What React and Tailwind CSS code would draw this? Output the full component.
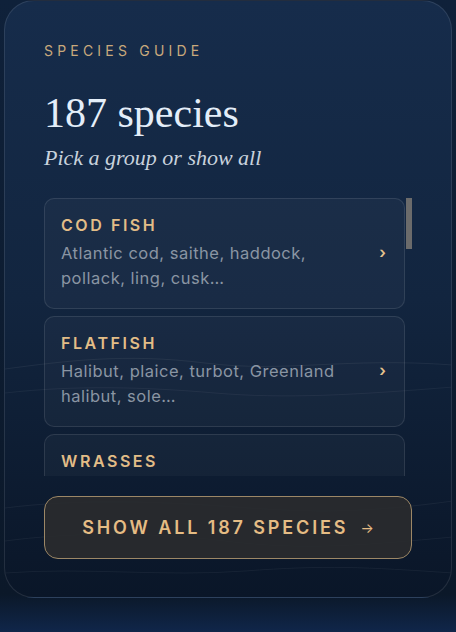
import React from "react";

const groups = [
  ["COD FISH", "Atlantic cod, saithe, haddock, pollack, ling, cusk…"],
  ["FLATFISH", "Halibut, plaice, turbot, Greenland halibut, sole…"],
  ["WRASSES", "Ballan wrasse, corkwing, cuckoo wrasse, goldsinny…"],
  ["SALMONIDS", "Atlantic salmon, sea trout, Arctic char, grayling…"],
  ["HERRINGS", "Atlantic herring, sprat, shad, allis shad…"],
];

const sans = { fontFamily: "'Inter', 'Lato', sans-serif" };
const serif = { fontFamily: "'Liberation Serif', 'DejaVu Serif', serif" };

export default function App() {
  return (
    <div className="w-[456px] h-[632px] overflow-hidden bg-gradient-to-b from-[#0f213a] via-[#0b1829] via-[94%] to-[#10264a] pl-[4px] pr-[4px]">
      <div className="relative w-[448px] h-[598px] rounded-[30px] border border-white/10 bg-gradient-to-b from-[#162c4b] via-[#12253f] to-[#0a1628] overflow-hidden">
        <svg className="absolute inset-0 pointer-events-none" width="448" height="598" viewBox="0 0 448 598" fill="none">
          <path d="M0 368 C 60 360, 120 352, 200 362 S 340 356, 448 364" stroke="rgba(255,255,255,0.06)" strokeWidth="1" />
          <path d="M0 392 C 70 384, 140 386, 210 392 S 350 394, 448 386" stroke="rgba(255,255,255,0.05)" strokeWidth="1" />
          <path d="M0 507 C 70 498, 150 500, 230 506 S 360 512, 448 500" stroke="rgba(255,255,255,0.05)" strokeWidth="1" />
          <path d="M0 540 C 60 532, 140 530, 220 540 S 360 544, 448 536" stroke="rgba(255,255,255,0.05)" strokeWidth="1" />
          <path d="M0 572 C 80 566, 160 576, 240 570 S 360 566, 448 572" stroke="rgba(255,255,255,0.05)" strokeWidth="1" />
        </svg>
        <div className="relative flex flex-col px-[39px] pt-[40px]">
          <div className="text-[14px] leading-[20px] tracking-[0.3em] text-[#c9a97c]" style={sans}>
            SPECIES GUIDE
          </div>
          <div className="mt-[29px] text-[42px] leading-[46px] text-[#e4eef9]" style={serif}>
            187 species
          </div>
          <div className="mt-[8px] text-[22px] leading-[28px] italic text-[#c8d2dd]" style={serif}>
            Pick a group or show all
          </div>
          <div className="mt-[26px] h-[278px] flex gap-[1px]">
            <div className="w-[362px] h-[278px] overflow-hidden flex flex-col gap-[7px]">
              {groups.map(([t, d]) => (
                <div
                  key={t}
                  className="shrink-0 flex items-center rounded-[10px] border border-white/10 bg-white/[0.03] pl-[16px] pr-[18px] pt-[16px] pb-[17px]"
                >
                  <div className="flex-1" style={sans}>
                    <div className="text-[16px] leading-[20px] font-semibold tracking-[0.16em] text-[#e2bd87]">{t}</div>
                    <div className="mt-[6px] w-[285px] text-[16.5px] leading-[25px] tracking-[0.03em] text-[#8a95a3]">{d}</div>
                  </div>
                  <div className="text-[16px] font-semibold text-[#e6c48f] -mt-[2px]" style={sans}>›</div>
                </div>
              ))}
            </div>
            <div className="w-[6px] h-[278px] flex flex-col">
              <div className="h-[51px] w-[6px] bg-[#6b6b6b]" />
            </div>
          </div>
          <button
            className="mt-[20px] h-[63px] w-[368px] rounded-[14px] border-[1.5px] border-[#9c8766] bg-[#2a2b2e]/90 flex items-center justify-center gap-[12px] text-[18px] font-semibold tracking-[0.16em] text-[#e5bc84]"
            style={sans}
          >
            <span>SHOW ALL 187 SPECIES</span>
            <span className="text-[14px] font-normal tracking-normal">→</span>
          </button>
        </div>
      </div>
    </div>
  );
}
